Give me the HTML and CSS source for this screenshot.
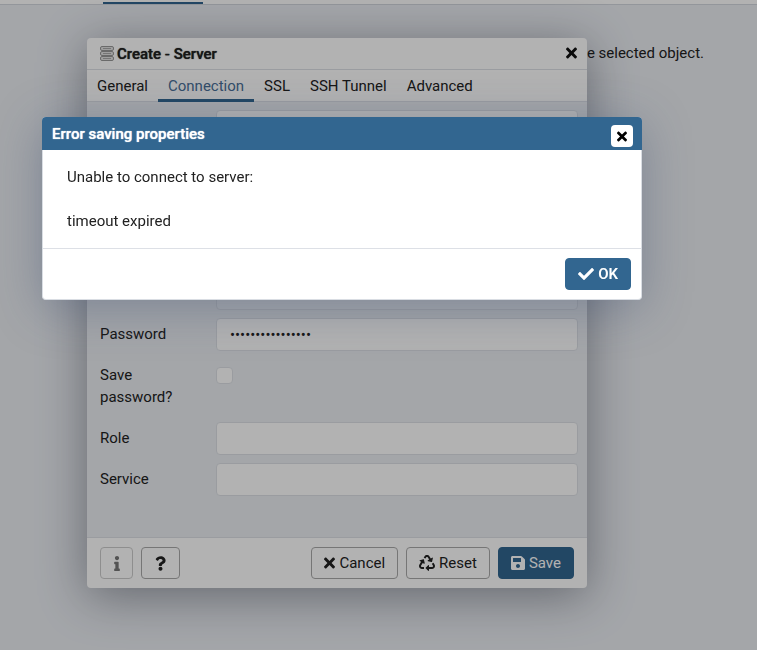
FILE: index.html
```
<!DOCTYPE html>
<html lang="en">
<head>
<meta charset="utf-8">
<title>Create - Server</title>
<link rel="stylesheet" href="styles.css">
</head>
<body>
<svg class="sprite" aria-hidden="true">
  <symbol id="times" viewBox="0 0 352 512"><path d="M242.72 256l100.07-100.07c12.28-12.28 12.28-32.19 0-44.48l-22.24-22.24c-12.28-12.28-32.19-12.28-44.48 0L176 189.28 75.93 89.21c-12.28-12.28-32.19-12.28-44.48 0L9.21 111.45c-12.28 12.28-12.28 32.19 0 44.48L109.28 256 9.21 356.07c-12.28 12.28-12.28 32.19 0 44.48l22.24 22.24c12.28 12.28 32.2 12.28 44.48 0L176 322.72l100.07 100.07c12.28 12.28 32.2 12.28 44.48 0l22.24-22.24c12.28-12.28 12.28-32.19 0-44.48L242.72 256z"/></symbol>
  <symbol id="check" viewBox="0 0 512 512"><path d="M173.898 439.404l-166.4-166.4c-9.997-9.997-9.997-26.206 0-36.204l36.203-36.204c9.997-9.998 26.207-9.998 36.204 0L192 312.69 432.095 72.596c9.997-9.997 26.207-9.997 36.204 0l36.203 36.204c9.997 9.997 9.997 26.206 0 36.204l-294.4 294.401c-9.998 9.997-26.207 9.997-36.204-.001z"/></symbol>
  <symbol id="save" viewBox="0 0 448 512"><path d="M433.941 129.941l-83.882-83.882A48 48 0 0 0 316.118 32H48C21.49 32 0 53.49 0 80v352c0 26.51 21.49 48 48 48h352c26.51 0 48-21.49 48-48V163.882a48 48 0 0 0-14.059-33.941zM224 416c-35.346 0-64-28.654-64-64 0-35.346 28.654-64 64-64s64 28.654 64 64c0 35.346-28.654 64-64 64zm96-304.52V212c0 6.627-5.373 12-12 12H76c-6.627 0-12-5.373-12-12V108c0-6.627 5.373-12 12-12h228.52c3.183 0 6.235 1.264 8.485 3.515l3.48 3.48A11.996 11.996 0 0 1 320 111.48z"/></symbol>
  <symbol id="info" viewBox="0 0 192 512"><path d="M20 424.229h20V279.771H20c-11.046 0-20-8.954-20-20V212c0-11.046 8.954-20 20-20h112c11.046 0 20 8.954 20 20v212.229h20c11.046 0 20 8.954 20 20V492c0 11.046-8.954 20-20 20H20c-11.046 0-20-8.954-20-20v-47.771c0-11.046 8.954-20 20-20zM96 0C56.235 0 24 32.235 24 72s32.235 72 72 72 72-32.235 72-72S135.764 0 96 0z"/></symbol>
  <symbol id="question" viewBox="0 0 384 512"><path d="M202.021 0C122.202 0 70.503 32.703 29.914 91.026c-7.363 10.58-5.093 25.086 5.178 32.874l43.138 32.709c10.373 7.865 25.132 6.026 33.253-4.148 25.049-31.381 43.63-49.449 82.757-49.449 30.764 0 68.816 19.799 68.816 49.631 0 22.552-18.617 34.134-48.993 51.164-35.423 19.86-82.299 44.576-82.299 106.405V320c0 11.046 8.954 20 20 20h72.471c11.046 0 20-8.954 20-20v-5.773c0-42.86 125.268-44.645 125.268-160.627C377.504 66.256 286.902 0 202.021 0zM192 373.459c-38.196 0-69.271 31.075-69.271 69.271 0 38.195 31.075 69.27 69.271 69.27s69.271-31.075 69.271-69.271-31.075-69.27-69.271-69.27z"/></symbol>
  <symbol id="recycle" viewBox="0 0 512 512"><path d="M184.561 261.903c3.232 13.997-12.123 24.635-24.068 17.168l-40.736-25.455-50.867 81.402C55.606 356.273 70.96 384 96.012 384H148c6.627 0 12 5.373 12 12v40c0 6.627-5.373 12-12 12H96.115c-75.334 0-121.302-83.048-81.408-146.88l50.822-81.388-40.725-25.448c-12.081-7.547-8.966-25.961 4.879-29.158l110.237-25.45c8.611-1.988 17.201 3.381 19.189 11.99l25.452 110.237zm98.561-182.915l41.289 66.076-40.74 25.457c-12.051 7.528-9 25.953 4.879 29.158l110.237 25.45c8.672 1.999 17.215-3.438 19.189-11.99l25.45-110.237c3.197-13.844-11.99-24.719-24.068-17.168l-40.687 25.424-41.263-66.082c-37.521-60.033-125.209-60.171-162.816 0l-17.963 28.766c-3.51 5.62-1.8 13.021 3.82 16.533l33.919 21.195c5.62 3.512 13.024 1.803 16.536-3.817l17.961-28.743c12.712-20.341 41.973-19.676 54.257-.022zM497.288 301.12l-27.515-44.065c-3.511-5.623-10.916-7.334-16.538-3.821l-33.861 21.159c-5.62 3.512-7.33 10.915-3.818 16.536l27.564 44.112c13.257 21.211-2.057 48.96-27.136 48.96H320V336.02c0-14.213-17.242-21.383-27.313-11.313l-80 79.981c-6.249 6.248-6.249 16.379 0 22.627l80 79.989C302.689 517.308 320 510.3 320 495.989V448h95.88c75.274 0 121.335-82.997 81.408-146.88z"/></symbol>
</svg>

<main class="page">
  <div class="page-tabs"><span class="page-tab"></span></div>
  <p class="page-note">e selected object.</p>
</main>

<section class="window server" role="dialog" aria-labelledby="server-title">
  <header class="server-head">
    <svg class="server-icon" viewBox="0 0 14 15" aria-hidden="true">
      <rect x="0.5" y="0.5" width="13" height="4" rx="1.5"/>
      <rect x="0.5" y="5.5" width="13" height="4" rx="1.5"/>
      <rect x="0.5" y="10.5" width="13" height="4" rx="1.5"/>
      <path d="M3 2.5h8M3 7.5h8M3 12.5h8"/>
    </svg>
    <h1 class="title" id="server-title">Create - Server</h1>
    <button class="plain-close" type="button" aria-label="Close"><svg class="icon icon-x"><use href="#times"/></svg></button>
  </header>
  <nav class="tabs">
    <a class="tab" href="#general">General</a>
    <a class="tab active" href="#connection">Connection</a>
    <a class="tab" href="#ssl">SSL</a>
    <a class="tab" href="#ssh">SSH Tunnel</a>
    <a class="tab" href="#advanced">Advanced</a>
  </nav>
  <form class="form" id="connection">
    <div class="row tall"><input class="field" type="text" aria-label="Host name/address"></div>
    <div class="row"><input class="field" type="text" aria-label="Port"></div>
    <div class="row tall"><input class="field" type="text" aria-label="Maintenance database"></div>
    <div class="row"><input class="field muted" type="text" aria-label="Username"></div>
    <div class="row"><label for="password">Password</label><input class="field" id="password" type="password" value="abcdefghijklmnop"></div>
    <div class="row"><label for="remember">Save password?</label><input class="check" id="remember" type="checkbox"></div>
    <div class="row"><label for="role">Role</label><input class="field" id="role" type="text"></div>
    <div class="row"><label for="service">Service</label><input class="field" id="service" type="text"></div>
  </form>
  <footer class="server-foot">
    <button class="button info" type="button" aria-label="Information" disabled><svg class="icon icon-info"><use href="#info"/></svg></button>
    <button class="button help" type="button" aria-label="Help"><svg class="icon icon-help"><use href="#question"/></svg></button>
    <button class="button push" type="button"><svg class="icon icon-x"><use href="#times"/></svg>Cancel</button>
    <button class="button" type="button"><svg class="icon icon-wide"><use href="#recycle"/></svg>Reset</button>
    <button class="button primary" type="button"><svg class="icon icon-save"><use href="#save"/></svg>Save</button>
  </footer>
</section>

<div class="backdrop"></div>

<section class="window alert" role="alertdialog" aria-labelledby="alert-title">
  <header class="alert-head">
    <h2 class="title" id="alert-title">Error saving properties</h2>
    <button class="boxed-close" type="button" aria-label="Close"><svg class="icon icon-x"><use href="#times"/></svg></button>
  </header>
  <div class="alert-body">
    <p>Unable to connect to server:</p>
    <p>timeout expired</p>
  </div>
  <footer class="alert-foot">
    <button class="button primary strong" type="button"><svg class="icon icon-wide"><use href="#check"/></svg>OK</button>
  </footer>
</section>
</body>
</html>
```
FILE: styles.css
```
* { box-sizing: border-box; }

body {
  margin: 0;
  background: #ebeef3;
  color: #222;
  font: 15px/22px Roboto, sans-serif;
}

h1, h2, p { margin: 0; }
button, input { font: inherit; color: inherit; }
.sprite { display: none; }

.page { min-height: 100vh; }
.page-tabs {
  display: flex;
  height: 5px;
  padding-left: 103px;
  background: #fff;
  border-bottom: 1px solid #d3d7de;
}
.page-tab { width: 100px; border-bottom: 2px solid #326690; }
.page-note { padding: 37px 53px 0 0; text-align: right; }

.window {
  position: absolute;
  display: flex;
  flex-direction: column;
  border-radius: 4px;
}
.server {
  top: 38px;
  left: 87px;
  width: 500px;
  background: #fff;
  box-shadow: 0 8px 48px rgba(34, 40, 56, 0.45);
}
.alert {
  top: 117px;
  left: 42px;
  width: 600px;
  background: #fff;
  border: 1px solid #d9dde3;
  border-top: 0;
  box-shadow: 0 8px 48px rgba(50, 70, 110, 0.35);
}

.backdrop { position: fixed; inset: 0; background: rgba(0, 0, 0, 0.3); }

.title {
  font-size: 15px;
  font-weight: 500;
  text-shadow: 0 0 1px currentColor;
}

.icon { display: block; fill: currentColor; }
.icon-x { width: 11px; height: 16px; }
.icon-wide { width: 16px; height: 16px; }
.icon-save { width: 14px; height: 16px; }
.icon-info { width: 6px; height: 15px; }
.icon-help { width: 11px; height: 15px; }

.server-head {
  display: flex;
  align-items: center;
  gap: 3px;
  height: 32px;
  padding: 0 10px 0 13px;
  border-bottom: 1px solid #dde0e6;
}
.server-icon { width: 14px; height: 15px; fill: #e4e4e4; stroke: #999; }
.server-icon path { stroke: #aaa; }
.plain-close { margin-left: auto; padding: 0 0 2px; border: 0; background: none; color: #111; }

.tabs { display: flex; height: 32px; border-bottom: 1px solid #dde0e6; }
.tab {
  height: 32px;
  padding: 5px 10px;
  color: #222;
  text-decoration: none;
  white-space: nowrap;
}
.tab.active { color: #4a6f98; border-bottom: 3px solid #326690; }

.form {
  display: flex;
  flex-direction: column;
  gap: 8px;
  padding: 8px 9px 41px 13px;
  background: #ebeef3;
}
.row { display: grid; grid-template-columns: 116px 1fr; align-items: start; }
.row.tall { min-height: 55px; }
.row label { width: 100px; padding: 5px 0 6px; }
.field {
  grid-column: 2;
  width: 100%;
  height: 33px;
  padding: 0 13px;
  border: 1px solid #dde0e6;
  border-radius: 4px;
  background: #fff;
}
.field.muted { background: #f0f2f6; }
.check {
  appearance: none;
  width: 17px;
  height: 17px;
  margin: 8px 0 0;
  border: 1px solid #dde0e6;
  border-radius: 4px;
  background: #fff;
}

.server-foot {
  display: flex;
  gap: 8px;
  padding: 9px 13px;
  border-top: 1px solid #dde0e6;
}
.button {
  display: flex;
  align-items: center;
  justify-content: center;
  gap: 4px;
  height: 32px;
  padding: 0 12px;
  border: 1px solid #aaa;
  border-radius: 4px;
  background: #fff;
  color: #222;
}
.info { width: 33px; color: #777; border-color: #ccc; }
.help { width: 39px; }
.push { margin-left: auto; }
.primary { border-color: #326690; background: #326690; color: #fff; }
.strong { font-weight: 600; }

.alert-head {
  display: flex;
  align-items: center;
  height: 33px;
  margin: 0 -1px;
  padding: 0 9px 0 10px;
  border-radius: 4px 4px 0 0;
  background: #326690;
  color: #fff;
}
.boxed-close {
  display: flex;
  align-items: center;
  justify-content: center;
  width: 22px;
  height: 22px;
  margin: 5px 0 0 auto;
  padding: 0;
  border: 0;
  border-radius: 4px;
  background: #fff;
  color: #000;
}
.boxed-close .icon { width: 10px; height: 15px; }
.alert-body { display: grid; gap: 22px; padding: 16px 24px; }
.alert-foot { display: flex; justify-content: flex-end; padding: 9px 10px; border-top: 1px solid #dde0e6; }
```
